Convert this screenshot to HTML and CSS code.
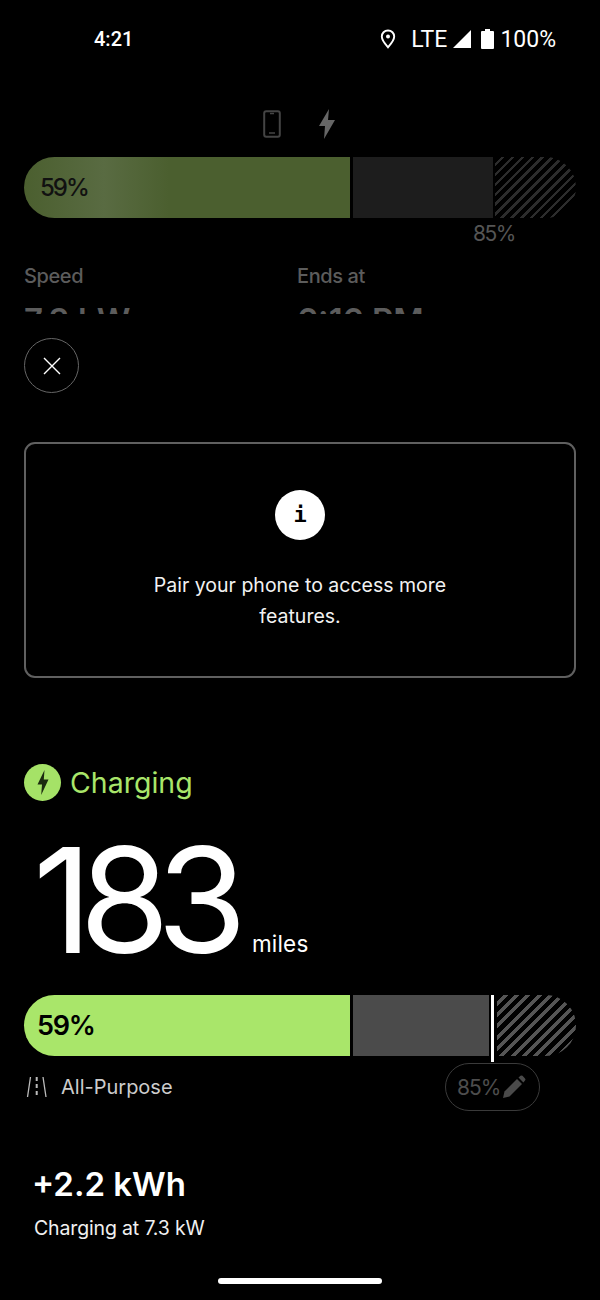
FILE: index.html
```html
<!DOCTYPE html>
<html lang="en">
<head>
    <meta charset="UTF-8">
    <title>Charging</title>
    <link rel="stylesheet" href="styles.css">
</head>
<body>
<div class="page">
    <div class="statusBar">
        <span class="clock">4:21</span>
        <div class="statusRight">
            <svg class="pinIcon" width="16" height="20" viewBox="0 0 16 20"><path d="M8 1.5C4.4 1.5 1.8 4.2 1.8 7.6 1.8 11.6 6 16 8 18.3 10 16 14.2 11.6 14.2 7.6 14.2 4.2 11.6 1.5 8 1.5Z" fill="none" stroke="#fff" stroke-width="1.9"/><circle cx="8" cy="7.6" r="2" fill="#fff"/></svg>
            <span class="lte">LTE</span>
            <svg width="20" height="20" viewBox="0 0 20 20"><path d="M19 1V19H1Z" fill="#fff"/></svg>
            <svg class="battIcon" width="13" height="20" viewBox="0 0 13 20"><path d="M4 0H9V2H12Q13 2 13 3V19Q13 20 12 20H1Q0 20 0 19V3Q0 2 1 2H4Z" fill="#fff"/></svg>
            <span class="pct">100%</span>
        </div>
    </div>

    <div class="peek">
        <div class="peekIcons">
            <svg width="18" height="28" viewBox="0 0 18 28"><rect x="1.2" y="1.2" width="15.6" height="25.6" rx="2" fill="none" stroke="#444" stroke-width="2"/><path d="M6 23H12" stroke="#444" stroke-width="1.5"/><path d="M7 3.5H11" stroke="#444" stroke-width="1.5"/></svg>
            <svg width="18" height="30" viewBox="0 0 18 30"><path d="M11 0 1 17H7L6 30 17 11H10Z" fill="#666"/></svg>
        </div>
        <div class="bar dimBar">
            <div class="seg fill"><span>59%</span></div>
            <div class="seg rest"></div>
            <div class="seg hatch"></div>
        </div>
        <div class="limitLabel">85%</div>
        <div class="stats">
            <div class="stat">
                <div class="statName">Speed</div>
                <div class="statValue">7.3 kW</div>
            </div>
            <div class="stat">
                <div class="statName">Ends at</div>
                <div class="statValue">6:16 PM</div>
            </div>
        </div>
    </div>

    <div class="closeBtn">
        <svg width="20" height="20" viewBox="0 0 20 20"><path d="M2 2 18 18M18 2 2 18" stroke="#fff" stroke-width="1.4"/></svg>
    </div>

    <div class="infoCard">
        <div class="infoDot">i</div>
        <p>Pair your phone to access more<br>features.</p>
    </div>

    <div class="chargeHead">
        <div class="boltDot">
            <svg width="12" height="25" viewBox="0 0 12 25"><path d="M7.5 0 .5 14.5H5L4.2 25 11.5 9.5H6.8Z" fill="#1c2b10"/></svg>
        </div>
        <span>Charging</span>
    </div>

    <div class="range">
        <span class="miles">183</span>
        <span class="unit">miles</span>
    </div>

    <div class="bar mainBar">
        <div class="seg fill"><span>59%</span></div>
        <div class="seg rest"></div>
        <div class="limitLine"></div>
        <div class="seg hatch"></div>
    </div>

    <div class="modeRow">
        <div class="mode">
            <svg width="22" height="20" viewBox="0 0 22 20"><path d="M4.5 0 1.5 20M17 0 20 20" stroke="#bbb" stroke-width="1.3" fill="none"/><path d="M10.7 0V20" stroke="#bbb" stroke-width="2" stroke-dasharray="4 3" fill="none"/></svg>
            <span>All-Purpose</span>
        </div>
        <div class="limitPill">
            <span>85%</span>
            <svg width="24" height="24" viewBox="0 0 24 24"><path d="M1 23 2.5 16.5 15 4 20 9 7.5 21.5Z" fill="#4a4a4a"/><path d="M16.5 2.5 18.5 .8Q19.5 0 20.5 .8L23 3.4Q24 4.4 23 5.4L21.4 7.4Z" fill="#4a4a4a"/></svg>
        </div>
    </div>

    <div class="added">+2.2 kWh</div>
    <div class="rate">Charging at 7.3 kW</div>

    <div class="homeBar"></div>
</div>
</body>
</html>
```

FILE: styles.css
```css
* {
    box-sizing: border-box;
}
body {
    margin: 0;
    background: #000;
    font-family: Inter, "Liberation Sans", sans-serif;
    color: #fff;
}
.page {
    width: 600px;
    height: 1300px;
    overflow: hidden;
    background: #000;
    padding: 0 24px;
}

.statusBar {
    display: flex;
    justify-content: space-between;
    align-items: center;
    height: 78px;
    padding: 0 20px 0 70px;
    font-family: Roboto, sans-serif;
    font-size: 23px;
}
.clock {
    font-size: 20px;
    font-weight: 500;
}
.statusRight {
    display: flex;
    align-items: center;
}
.lte {
    margin: 0 5px 0 15px;
}
.battIcon {
    margin: 0 6px 0 9px;
}

.peek {
    height: 236px;
    overflow: hidden;
}
.peekIcons {
    display: flex;
    justify-content: center;
    align-items: center;
    gap: 37px;
    height: 30px;
    margin: 31px 0 18px;
    padding-right: 2px;
}
.bar {
    display: flex;
    height: 61px;
    border-radius: 31px;
    overflow: hidden;
}
.seg {
    height: 100%;
}
.fill {
    width: 326px;
    display: flex;
    align-items: center;
    font-weight: 500;
    color: #000;
}
.rest {
    margin-left: 3px;
}
.hatch {
    flex: 1;
}
.dimBar .fill {
    background: linear-gradient(90deg, #4b5f2f 0, #596b42 80px, #4b5f2f 145px);
    padding-left: 16px;
    font-size: 24px;
    letter-spacing: -2px;
}
.dimBar .fill span {
    color: #111;
}
.dimBar .rest {
    width: 140px;
    background: #1d1d1d;
}
.dimBar .hatch {
    margin-left: 2px;
    background: repeating-linear-gradient(135deg, #000 0, #000 4.5px, #2c2c2c 4.5px, #2c2c2c 7px);
}
.limitLabel {
    margin: 3px 0 0 449px;
    font-size: 21px;
    letter-spacing: -1.5px;
    color: #555;
}
.stats {
    display: flex;
    margin-top: 18px;
    font-size: 20px;
    color: #5c5c5c;
}
.stat {
    width: 273px;
}
.statName {
    font-weight: 500;
    letter-spacing: -0.4px;
}
.statValue {
    margin-top: 12px;
    font-size: 33px;
    font-weight: 600;
    line-height: 40px;
}

.closeBtn {
    display: flex;
    align-items: center;
    justify-content: center;
    width: 55px;
    height: 55px;
    margin-top: 24px;
    border: 1px solid #666;
    border-radius: 50%;
}

.infoCard {
    height: 236px;
    margin-top: 49px;
    padding-top: 46px;
    border: 2px solid #606060;
    border-radius: 11px;
    text-align: center;
}
.infoDot {
    width: 50px;
    height: 50px;
    margin: 0 auto;
    border-radius: 50%;
    background: #fff;
    color: #000;
    font-family: "DejaVu Sans Mono", monospace;
    font-size: 22px;
    font-weight: 700;
    line-height: 50px;
}
.infoCard p {
    margin: 30px 0 0;
    font-size: 19.5px;
    line-height: 30.5px;
    color: #f2f2f2;
}

.chargeHead {
    display: flex;
    align-items: center;
    gap: 9px;
    margin-top: 86px;
    font-size: 28.5px;
    color: #a9e66a;
}
.boltDot {
    display: flex;
    align-items: center;
    justify-content: center;
    width: 37px;
    height: 37px;
    border-radius: 50%;
    background: #a5e267;
}

.range {
    display: flex;
    align-items: flex-end;
    gap: 18px;
    height: 160px;
    padding-left: 9px;
    margin-top: 19px;
}
.miles {
    font-size: 146px;
    letter-spacing: -13px;
    line-height: 160px;
}
.unit {
    padding-bottom: 22px;
    font-size: 22.5px;
    line-height: 28px;
    letter-spacing: 0.2px;
}

.mainBar {
    overflow: visible;
    margin-top: 15px;
}
.mainBar .fill {
    background: #a9e66a;
    padding-left: 13px;
    font-size: 27px;
    font-weight: 600;
    letter-spacing: -1.3px;
    border-radius: 31px 0 0 31px;
}
.mainBar .rest {
    width: 136px;
    background: #4b4b4b;
}
.limitLine {
    width: 3px;
    height: 67px;
    margin-left: 2px;
    background: #fff;
}
.mainBar .hatch {
    margin-left: 3px;
    border-radius: 0 31px 31px 0;
    background: repeating-linear-gradient(135deg, #000 0, #000 4.5px, #555 4.5px, #555 8px);
}

.modeRow {
    display: flex;
    justify-content: space-between;
    align-items: center;
    margin-top: 7px;
    padding-right: 36px;
}
.mode {
    display: flex;
    align-items: center;
    gap: 13px;
    margin-top: -1px;
    padding-left: 2px;
    font-size: 20px;
    color: #ccc;
}
.limitPill {
    display: flex;
    align-items: center;
    gap: 2px;
    width: 95px;
    height: 48px;
    padding-left: 11px;
    border: 1px solid #3a3a3a;
    border-radius: 24px;
    font-size: 21px;
    letter-spacing: -1px;
    color: #4d4d4d;
}

.added {
    margin-top: 53px;
    padding-left: 8px;
    font-size: 33px;
    font-weight: 600;
    line-height: 40px;
}
.rate {
    margin-top: 10px;
    padding-left: 10px;
    font-size: 19.5px;
    letter-spacing: -0.15px;
    line-height: 28px;
    color: #f0f0f0;
}

.homeBar {
    width: 164px;
    height: 6px;
    margin: 36px auto 0;
    border-radius: 3px;
    background: #fff;
}
```
